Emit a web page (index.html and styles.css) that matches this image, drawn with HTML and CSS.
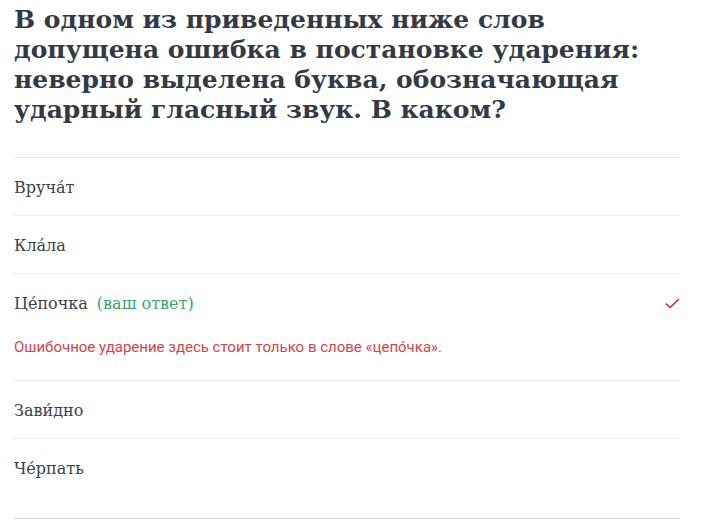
FILE: index.html
```html
<!DOCTYPE html>
<html lang="ru">
<head>
    <meta charset="UTF-8">
    <meta name="viewport" content="width=device-width, initial-scale=1.0">
    <title>Ударения</title>
    <link rel="stylesheet" href="styles.css">
</head>
<body>
    <div class="task">
        <h1 class="question">В одном из приведенных ниже слов допущена ошибка в постановке ударения: неверно выделена буква, обозначающая ударный гласный звук. В каком?</h1>

        <ul class="answers">
            <li class="answer">
                <div class="answer-row"><span class="word">Вруча́т</span></div>
            </li>
            <li class="answer">
                <div class="answer-row"><span class="word">Кла́ла</span></div>
            </li>
            <li class="answer answer-chosen">
                <div class="answer-row">
                    <span class="word">Це́почка</span>
                    <span class="mark">(ваш ответ)</span>
                    <svg class="check" width="15" height="11" viewBox="0 0 15 11">
                        <path d="M1 5.5 L5 9.5 L14 1" fill="none" stroke="#d8242e" stroke-width="1.6"/>
                    </svg>
                </div>
                <p class="feedback">Ошибочное ударение здесь стоит только в слове «цепо́чка».</p>
            </li>
            <li class="answer">
                <div class="answer-row"><span class="word">Зави́дно</span></div>
            </li>
            <li class="answer answer-last">
                <div class="answer-row"><span class="word">Че́рпать</span></div>
            </li>
        </ul>
    </div>
</body>
</html>
```

FILE: styles.css
```css
body {
    margin: 0;
    background: #fff;
    font-family: "DejaVu Serif", serif;
    color: #343a46;
}
.task {
    width: 666px;
    padding: 5px 14px 0;
}
.question {
    margin: 0 0 32px;
    font-size: 25px;
    line-height: 30px;
    font-weight: bold;
    color: #333a45;
}
.answers {
    list-style: none;
    margin: 0;
    padding: 0;
    border-bottom: 1px solid #d6d6d6;
}
.answer {
    border-top: 1px solid #ebebeb;
    padding: 20px 0 18px;
}
.answer-row {
    display: flex;
    align-items: center;
    height: 19px;
    font-size: 16px;
    color: #3b414c;
}
.mark {
    margin-left: 9px;
    color: #3aa76d;
}
.check {
    margin-left: auto;
}
.feedback {
    margin: 25px 0 0;
    font-family: Roboto, "Liberation Sans", sans-serif;
    font-size: 15px;
    line-height: 18px;
    color: #d8434a;
}
.answer-chosen {
    padding-bottom: 24px;
}
.answer-last {
    padding-bottom: 40px;
}
```
